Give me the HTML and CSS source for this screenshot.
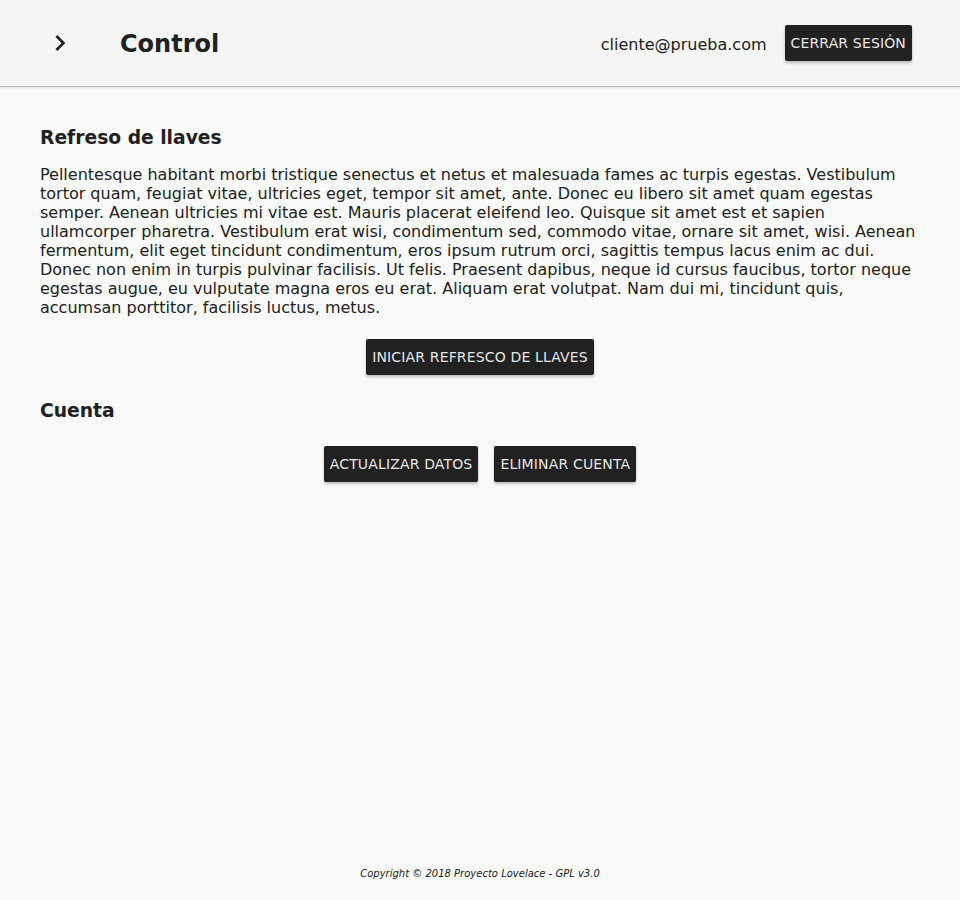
FILE: index.html
```html
<!DOCTYPE html>
<html lang="es">
<head>
<meta charset="utf-8">
<title>Control</title>
<link rel="stylesheet" href="styles.css">
</head>
<body>
<div class="page">
  <header class="topbar">
    <button class="menu-btn" aria-label="menu">
      <svg viewBox="0 0 24 24" width="32" height="32"><path d="M10 6L8.59 7.41 13.17 12l-4.58 4.59L10 18l6-6z" fill="#212121"/></svg>
    </button>
    <h1 class="title">Control</h1>
    <div class="spacer"></div>
    <span class="email">cliente@prueba.com</span>
    <button class="btn">Cerrar sesión</button>
  </header>
  <main class="content">
    <h2 class="section-title">Refreso de llaves</h2>
    <p class="text">Pellentesque habitant morbi tristique senectus et netus et malesuada fames ac turpis egestas. Vestibulum tortor quam, feugiat vitae, ultricies eget, tempor sit amet, ante. Donec eu libero sit amet quam egestas semper. Aenean ultricies mi vitae est. Mauris placerat eleifend leo. Quisque sit amet est et sapien ullamcorper pharetra. Vestibulum erat wisi, condimentum sed, commodo vitae, ornare sit amet, wisi. Aenean fermentum, elit eget tincidunt condimentum, eros ipsum rutrum orci, sagittis tempus lacus enim ac dui. Donec non enim in turpis pulvinar facilisis. Ut felis. Praesent dapibus, neque id cursus faucibus, tortor neque egestas augue, eu vulputate magna eros eu erat. Aliquam erat volutpat. Nam dui mi, tincidunt quis, accumsan porttitor, facilisis luctus, metus.</p>
    <div class="actions">
      <button class="btn">Iniciar refresco de llaves</button>
    </div>
    <h2 class="section-title account">Cuenta</h2>
    <div class="actions">
      <button class="btn">Actualizar datos</button>
      <button class="btn">Eliminar cuenta</button>
    </div>
  </main>
  <footer class="footer">Copyright © 2018 Proyecto Lovelace - GPL v3.0</footer>
</div>
</body>
</html>
```
FILE: styles.css
```css
* { box-sizing: border-box; }
html, body { margin: 0; padding: 0; }
body {
  background: #fafafa;
  color: #212121;
  font-family: "DejaVu Sans", sans-serif;
}
.page {
  min-height: 100vh;
  display: flex;
  flex-direction: column;
}
.topbar {
  height: 87px;
  background: #f5f5f5;
  border-bottom: 1px solid #b8b8b8;
  box-shadow: 0 1px 3px rgba(0,0,0,0.12);
  display: flex;
  align-items: center;
  padding: 0 48px 0 44px;
}
.menu-btn {
  width: 32px;
  height: 32px;
  padding: 0;
  border: 0;
  background: none;
  display: flex;
}
.title {
  margin: 2px 0 0 44px;
  font-size: 24px;
  font-weight: bold;
  color: #212121;
}
.spacer { flex: 1; }
.email {
  font-size: 16px;
  color: #212121;
  margin: 2px 18px 0 0;
}
.btn {
  font-family: "DejaVu Sans", sans-serif;
  font-size: 14px;
  letter-spacing: 0.15px;
  text-transform: uppercase;
  background: #212121;
  color: #e6e6e6;
  border: 0;
  border-radius: 2px;
  height: 36px;
  padding: 0 6px;
  box-shadow: 0 2px 3px rgba(0,0,0,0.25);
}
.content {
  padding: 40px 40px 0 40px;
}
.section-title {
  margin: 0 0 16px 0;
  font-size: 18.72px;
  font-weight: bold;
  line-height: 22px;
}
.text {
  margin: 0;
  font-size: 16px;
  line-height: 19px;
}
.actions {
  display: flex;
  justify-content: center;
  gap: 16px;
  margin-top: 22px;
}
.account {
  margin-top: 25px;
  margin-bottom: 24px;
}
.account + .actions { margin-top: 0; }
.footer {
  margin-top: auto;
  text-align: center;
  font-size: 10px;
  font-style: italic;
  line-height: 12px;
  padding-bottom: 20px;
}
```
